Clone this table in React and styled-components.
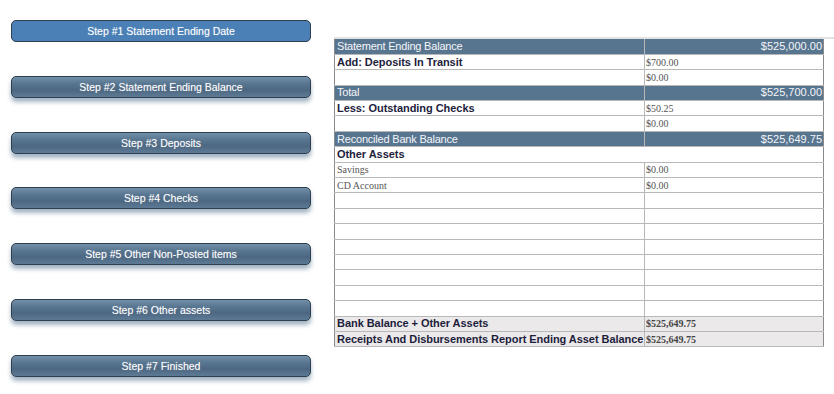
import React from 'react';
import styled, { createGlobalStyle } from 'styled-components';

const GlobalStyle = createGlobalStyle`
  html, body {
    margin: 0;
    padding: 0;
    background: #fff;
    font-family: "Liberation Sans", Arial, sans-serif;
  }
`;

const Page = styled.div`
  display: flex;
  align-items: flex-start;
  width: 834px;
  height: 394px;
  overflow: hidden;
`;

const StepList = styled.div`
  display: flex;
  flex-direction: column;
  gap: 33.8px;
  width: 300px;
  padding: 20px 0 0 11px;
  flex-shrink: 0;
`;

const StepButton = styled.div`
  height: 20px;
  border: 1px solid #2f3f4f;
  border-radius: 5px;
  display: flex;
  align-items: center;
  justify-content: center;
  color: #fff;
  font-size: 10.5px;
  cursor: pointer;
  background: ${({ active }) =>
    active
      ? '#4a80b6'
      : 'linear-gradient(to bottom, #7390aa 0%, #587590 35%, #4d6781 65%, #5d7a95 100%)'};
  box-shadow: ${({ active }) =>
    active ? 'none' : '0 4px 4px rgba(90, 120, 150, 0.55)'};
  text-shadow: 0 0 1px rgba(255, 255, 255, 0.35);
`;

const TableWrap = styled.div`
  flex: 1;
  margin: 37px 0 0 23px;
  border-top: 2px solid #e2e2e2;
`;

const Table = styled.table`
  width: 489px;
  border-collapse: collapse;
  table-layout: fixed;
  border-left: 1px solid #8a8a8a;
  border-right: 1px solid #8a8a8a;
  border-bottom: 1px solid #8a8a8a;
`;

const Row = styled.tr`
  height: 15.4px;
  background: ${({ tone }) =>
    tone === 'head' ? '#587590' : tone === 'sum' ? '#ebe9ea' : '#fff'};
`;

const Label = styled.td`
  padding: 0 0 0 2px;
  border-bottom: 1px solid #b8b8b8;
  border-right: ${({ span }) => (span ? 'none' : '1px solid #b8b8b8')};
  font-family: ${({ kind }) =>
    kind === 'plain' ? '"Liberation Serif", "Times New Roman", serif' : '"Liberation Sans", Arial, sans-serif'};
  font-size: ${({ kind }) => (kind === 'plain' ? '10px' : '11px')};
  font-weight: ${({ kind }) => (kind === 'bold' ? 700 : 400)};
  color: ${({ kind }) =>
    kind === 'head' ? '#f4f6f8' : kind === 'plain' ? '#555' : '#1d1d3c'};
  letter-spacing: ${({ kind }) => (kind === 'head' ? '-0.2px' : kind === 'bold' ? '-0.05px' : '0')};
  white-space: nowrap;
  overflow: hidden;
  line-height: 13px;
`;

const Value = styled.td`
  padding: 0 1px;
  border-bottom: 1px solid #b8b8b8;
  text-align: ${({ kind }) => (kind === 'head' ? 'right' : 'left')};
  font-family: ${({ kind }) =>
    kind === 'head' ? '"Liberation Sans", Arial, sans-serif' : '"Liberation Serif", "Times New Roman", serif'};
  font-size: ${({ kind }) => (kind === 'head' ? '11px' : '10px')};
  font-weight: ${({ kind }) => (kind === 'sum' ? 700 : 400)};
  color: ${({ kind }) => (kind === 'head' ? '#f4f6f8' : kind === 'sum' ? '#444' : '#555')};
  white-space: nowrap;
  line-height: 13px;
`;

const steps = [
  'Step #1 Statement Ending Date',
  'Step #2 Statement Ending Balance',
  'Step #3 Deposits',
  'Step #4 Checks',
  'Step #5 Other Non-Posted items',
  'Step #6 Other assets',
  'Step #7 Finished',
];

// tone: head | bold | plain | sum | span
const rows = [
  { tone: 'head', label: 'Statement Ending Balance', value: '$525,000.00' },
  { tone: 'bold', label: 'Add: Deposits In Transit', value: '$700.00' },
  { tone: 'plain', label: '', value: '$0.00' },
  { tone: 'head', label: 'Total', value: '$525,700.00' },
  { tone: 'bold', label: 'Less: Outstanding Checks', value: '$50.25' },
  { tone: 'plain', label: '', value: '$0.00' },
  { tone: 'head', label: 'Reconciled Bank Balance', value: '$525,649.75' },
  { tone: 'span', label: 'Other Assets' },
  { tone: 'plain', label: 'Savings', value: '$0.00' },
  { tone: 'plain', label: 'CD Account', value: '$0.00' },
  ...Array.from({ length: 8 }, () => ({ tone: 'plain', label: '', value: '' })),
  { tone: 'sum', label: 'Bank Balance + Other Assets', value: '$525,649.75' },
  {
    tone: 'sum',
    label: 'Receipts And Disbursements Report Ending Asset Balance',
    value: '$525,649.75',
  },
];

function ReconcileRow({ row }) {
  if (row.tone === 'span') {
    return (
      <Row>
        <Label colSpan={2} span kind="bold">
          {row.label}
        </Label>
      </Row>
    );
  }
  const labelKind = row.tone === 'head' ? 'head' : row.tone === 'plain' ? 'plain' : 'bold';
  const valueKind = row.tone === 'head' ? 'head' : row.tone === 'sum' ? 'sum' : 'plain';
  return (
    <Row tone={row.tone}>
      <Label kind={labelKind}>{row.label}</Label>
      <Value kind={valueKind}>{row.value}</Value>
    </Row>
  );
}

export default function App() {
  return (
    <>
      <GlobalStyle />
      <Page>
        <StepList>
          {steps.map((s, i) => (
            <StepButton key={s} active={i === 0}>
              {s}
            </StepButton>
          ))}
        </StepList>
        <TableWrap>
          <Table>
            <colgroup>
              <col style={{ width: 310 }} />
              <col style={{ width: 179 }} />
            </colgroup>
            <tbody>
              {rows.map((r, i) => (
                <ReconcileRow key={i} row={r} />
              ))}
            </tbody>
          </Table>
        </TableWrap>
      </Page>
    </>
  );
}
